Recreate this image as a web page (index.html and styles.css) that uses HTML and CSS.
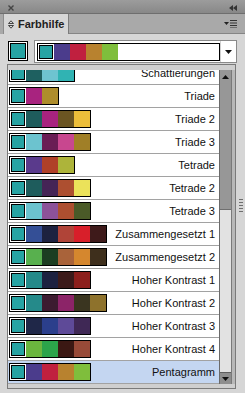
FILE: index.html
```html
<!DOCTYPE html>
<html lang="de">
<head>
    <meta charset="UTF-8">
    <meta name="viewport" content="width=device-width, initial-scale=1.0">
    <link rel="stylesheet" href="styles.css">
</head>
<body>

<div class="panel">

    <!-- Title bar -->
    <div class="titlebar">
        <svg class="close" width="6" height="6" viewBox="0 0 6 6"><path d="M0.5 0.5L5.5 5.5M5.5 0.5L0.5 5.5" stroke="#444" stroke-width="1.4"/></svg>
        <svg class="collapse" width="8" height="6" viewBox="0 0 8 6"><path d="M0 3L4 0V6Z M4 3L8 0V6Z" fill="#333"/></svg>
    </div>

    <!-- Tabs -->
    <div class="tabrow">
        <div class="tab">
            <svg class="tab-icon" width="6" height="9" viewBox="0 0 6 9"><path d="M0.5 3.5L3 0.8L5.5 3.5Z M0.5 5.5L3 8.2L5.5 5.5Z" fill="none" stroke="#333" stroke-width="0.9"/></svg>
            <span>Farbhilfe</span>
        </div>
        <div class="tabfill">
            <svg class="menu-icon" width="13" height="8" viewBox="0 0 13 8"><path d="M0 2H5L2.5 5Z" fill="#222"/><path d="M6 0.5H13M6 3H13M6 5.5H13M6 8H13" stroke="#333" stroke-width="1"/></svg>
        </div>
    </div>

    <!-- Base colour + harmony picker -->
    <div class="toolbar">
        <div class="swatch"><div class="swatch-fill"></div></div>
        <div class="picker">
            <div class="picker-value">
                <div class="strip">
                    <i class="base"></i>
                    <i style="background:#4b3c8c"></i>
                    <i style="background:#c0203f"></i>
                    <i style="background:#b8822f"></i>
                    <i style="background:#7fbe3c"></i>
                </div>
            </div>
            <div class="picker-btn">
                <svg width="7" height="4" viewBox="0 0 7 4"><path d="M0 0H7L3.5 4Z" fill="#111"/></svg>
            </div>
        </div>
    </div>

    <!-- Harmony list -->
    <div class="listbox">
        <div class="list">
            <div class="row first">
                <div class="strip"><i class="base"></i><i style="background:#1e6060"></i><i style="background:#6ec4d0"></i><i style="background:#30b3b3"></i></div>
                <span class="name">Schattierungen</span>
            </div>
            <div class="row">
                <div class="strip"><i class="base"></i><i style="background:#a8237f"></i><i style="background:#ae8d2c"></i></div>
                <span class="name">Triade</span>
            </div>
            <div class="row">
                <div class="strip"><i class="base"></i><i style="background:#1e5c5c"></i><i style="background:#a8237f"></i><i style="background:#6b5522"></i><i style="background:#ecbe3a"></i></div>
                <span class="name">Triade 2</span>
            </div>
            <div class="row">
                <div class="strip"><i class="base"></i><i style="background:#6cc3cf"></i><i style="background:#6a1d55"></i><i style="background:#c8478f"></i><i style="background:#a07f27"></i></div>
                <span class="name">Triade 3</span>
            </div>
            <div class="row">
                <div class="strip"><i class="base"></i><i style="background:#5a3a8c"></i><i style="background:#b04028"></i><i style="background:#adb43a"></i></div>
                <span class="name">Tetrade</span>
            </div>
            <div class="row">
                <div class="strip"><i class="base"></i><i style="background:#1e5c5c"></i><i style="background:#452456"></i><i style="background:#ad4f30"></i><i style="background:#ebe25a"></i></div>
                <span class="name">Tetrade 2</span>
            </div>
            <div class="row">
                <div class="strip"><i class="base"></i><i style="background:#6cc3cf"></i><i style="background:#8c5299"></i><i style="background:#ad4f30"></i><i style="background:#4a5a28"></i></div>
                <span class="name">Tetrade 3</span>
            </div>
            <div class="row">
                <div class="strip"><i class="base"></i><i style="background:#344f96"></i><i style="background:#1d2240"></i><i style="background:#b04438"></i><i style="background:#d81f2a"></i><i style="background:#3e1a1a"></i></div>
                <span class="name">Zusammengesetzt 1</span>
            </div>
            <div class="row">
                <div class="strip"><i class="base"></i><i style="background:#58b04e"></i><i style="background:#1c3e22"></i><i style="background:#a9633a"></i><i style="background:#d5872e"></i><i style="background:#3e2f1c"></i></div>
                <span class="name">Zusammengesetzt 2</span>
            </div>
            <div class="row">
                <div class="strip"><i class="base"></i><i style="background:#258a8a"></i><i style="background:#1c2140"></i><i style="background:#3b1a1a"></i><i style="background:#8c1f1c"></i></div>
                <span class="name">Hoher Kontrast 1</span>
            </div>
            <div class="row">
                <div class="strip"><i class="base"></i><i style="background:#258a8a"></i><i style="background:#3c1b30"></i><i style="background:#8c2468"></i><i style="background:#3a3520"></i><i style="background:#8e722c"></i></div>
                <span class="name">Hoher Kontrast 2</span>
            </div>
            <div class="row">
                <div class="strip"><i class="base"></i><i style="background:#1f2748"></i><i style="background:#2b3f8c"></i><i style="background:#5e4a98"></i><i style="background:#3f2855"></i></div>
                <span class="name">Hoher Kontrast 3</span>
            </div>
            <div class="row">
                <div class="strip"><i class="base"></i><i style="background:#6bb63e"></i><i style="background:#2ca44a"></i><i style="background:#3b1813"></i><i style="background:#984a38"></i></div>
                <span class="name">Hoher Kontrast 4</span>
            </div>
            <div class="row selected">
                <div class="strip"><i class="base"></i><i style="background:#4b3c8c"></i><i style="background:#c0203f"></i><i style="background:#b8822f"></i><i style="background:#7fbe3c"></i></div>
                <span class="name">Pentagramm</span>
            </div>
        </div>

        <div class="scroll">
            <div class="scroll-up">
                <svg width="7" height="4" viewBox="0 0 7 4"><path d="M0 4H7L3.5 0Z" fill="#111"/></svg>
            </div>
            <div class="scroll-thumb"></div>
            <div class="scroll-track"></div>
            <div class="scroll-down">
                <svg width="7" height="4" viewBox="0 0 7 4"><path d="M0 0H7L3.5 4Z" fill="#111"/></svg>
            </div>
        </div>
        <div class="gutter"></div>
    </div>

    <div class="edge"><div class="grip"></div></div>
</div>

</body>
</html>
```

FILE: styles.css
```css
body {
    margin: 0;
    padding: 0;
    background-color: #d6d6d6;
    font-family: "Liberation Sans", Arial, sans-serif;
    color: #111;
}
.panel {
    width: 245px;
    height: 393px;
    overflow: hidden;
    position: relative;
}

/* title bar */
.titlebar {
    height: 13px;
    display: flex;
    align-items: center;
    justify-content: space-between;
    padding: 0 8px 0 8px;
    background: linear-gradient(#9c9c9c, #888888);
    border-bottom: 1px solid #6e6e6e;
}
.close {
    margin-top: 2px;
}
.collapse {
    margin-top: 2px;
}

/* tab row */
.tabrow {
    height: 20px;
    display: flex;
    align-items: flex-end;
    padding-left: 3px;
    background-color: #a9a9a9;
}
.tab {
    box-sizing: border-box;
    width: 66px;
    height: 20px;
    display: flex;
    align-items: center;
    gap: 4px;
    padding-left: 4px;
    background-color: #d6d6d6;
    border-left: 1px solid #8c8c8c;
    border-right: 1px solid #7c7c7c;
    font-size: 11px;
    font-weight: bold;
    color: #222;
}
.tab-icon {
    flex: none;
}
.tabfill {
    flex: 1;
    height: 20px;
    box-sizing: border-box;
    border-bottom: 1px solid #858585;
    display: flex;
    align-items: center;
    justify-content: flex-end;
    padding-right: 8px;
}

/* toolbar */
.toolbar {
    height: 30px;
    box-sizing: border-box;
    display: flex;
    align-items: flex-start;
    padding: 6px 0 0 8px;
}
.swatch {
    margin-top: 1px;
    width: 20px;
    height: 20px;
    box-sizing: border-box;
    border: 1px solid #000;
    padding: 1px;
    background-color: #fff;
}
.swatch-fill {
    width: 100%;
    height: 100%;
    box-sizing: border-box;
    border: 1px solid #000;
    background-color: #27a3a3;
}
.picker {
    margin-left: 6px;
    width: 203px;
    height: 23px;
    box-sizing: border-box;
    display: flex;
    border: 1px solid #8a8a8a;
    background-color: #fff;
}
.picker-value {
    flex: 1;
    padding: 2px 0 0 2px;
}
.picker-btn {
    width: 15px;
    display: flex;
    align-items: center;
    justify-content: center;
    border-left: 1px solid #d0d0d0;
}

/* colour strip */
.strip {
    display: flex;
    border: 1px solid #000;
    height: 16px;
    flex: none;
}
.strip i {
    width: 16px;
    height: 16px;
    box-sizing: border-box;
}
.strip .base {
    border: 1px solid #fff;
    background-color: #27a3a3;
    box-shadow: inset 0 0 0 1px #000;
}

/* list */
.listbox {
    margin-left: 7px;
    width: 229px;
    height: 325px;
    box-sizing: border-box;
    border: 1px solid #7a7a7a;
    padding-top: 5px;
    display: flex;
    align-items: flex-start;
    background-color: #cfcfcf;
}
.list {
    width: 211px;
    height: 314px;
    overflow: hidden;
    background-color: #fff;
}
.row {
    height: 22px;
    display: flex;
    align-items: center;
    justify-content: space-between;
    padding: 0 4px 0 1px;
    border-bottom: 1px solid #a2a2a2;
}
.row.first {
    margin-top: -8px;
}
.row.selected {
    background-color: #c4d6f1;
}
.name {
    font-size: 11px;
    white-space: nowrap;
}

/* scrollbar */
.scroll {
    width: 11px;
    height: 314px;
    display: flex;
    flex-direction: column;
    border-left: 1px solid #6a6a6a;
    border-right: 1px solid #7a7a7a;
}
.scroll-up {
    height: 14px;
    display: flex;
    align-items: center;
    justify-content: center;
    box-sizing: border-box;
    background-color: #979797;
}
.scroll-thumb {
    height: 125px;
    background-color: #979797;
    border-bottom: 1px solid #6f6f6f;
}
.scroll-track {
    flex: 1;
    background-color: #e2e2e2;
}
.scroll-down {
    height: 11px;
    display: flex;
    align-items: center;
    justify-content: center;
    background-color: #8e8e8e;
    border-top: 1px solid #5e5e5e;
}
.gutter {
    flex: 1;
    height: 314px;
    background-color: #b8b8b8;
}

/* right edge with resize grip */
.edge {
    position: absolute;
    top: 64px;
    right: 0;
    width: 9px;
    height: 325px;
    display: flex;
    justify-content: center;
}
.grip {
    margin-top: 134px;
    width: 4px;
    height: 15px;
    background: radial-gradient(circle, #6e6e6e 0.7px, transparent 1px) 0 0 / 2px 3px;
}
```
